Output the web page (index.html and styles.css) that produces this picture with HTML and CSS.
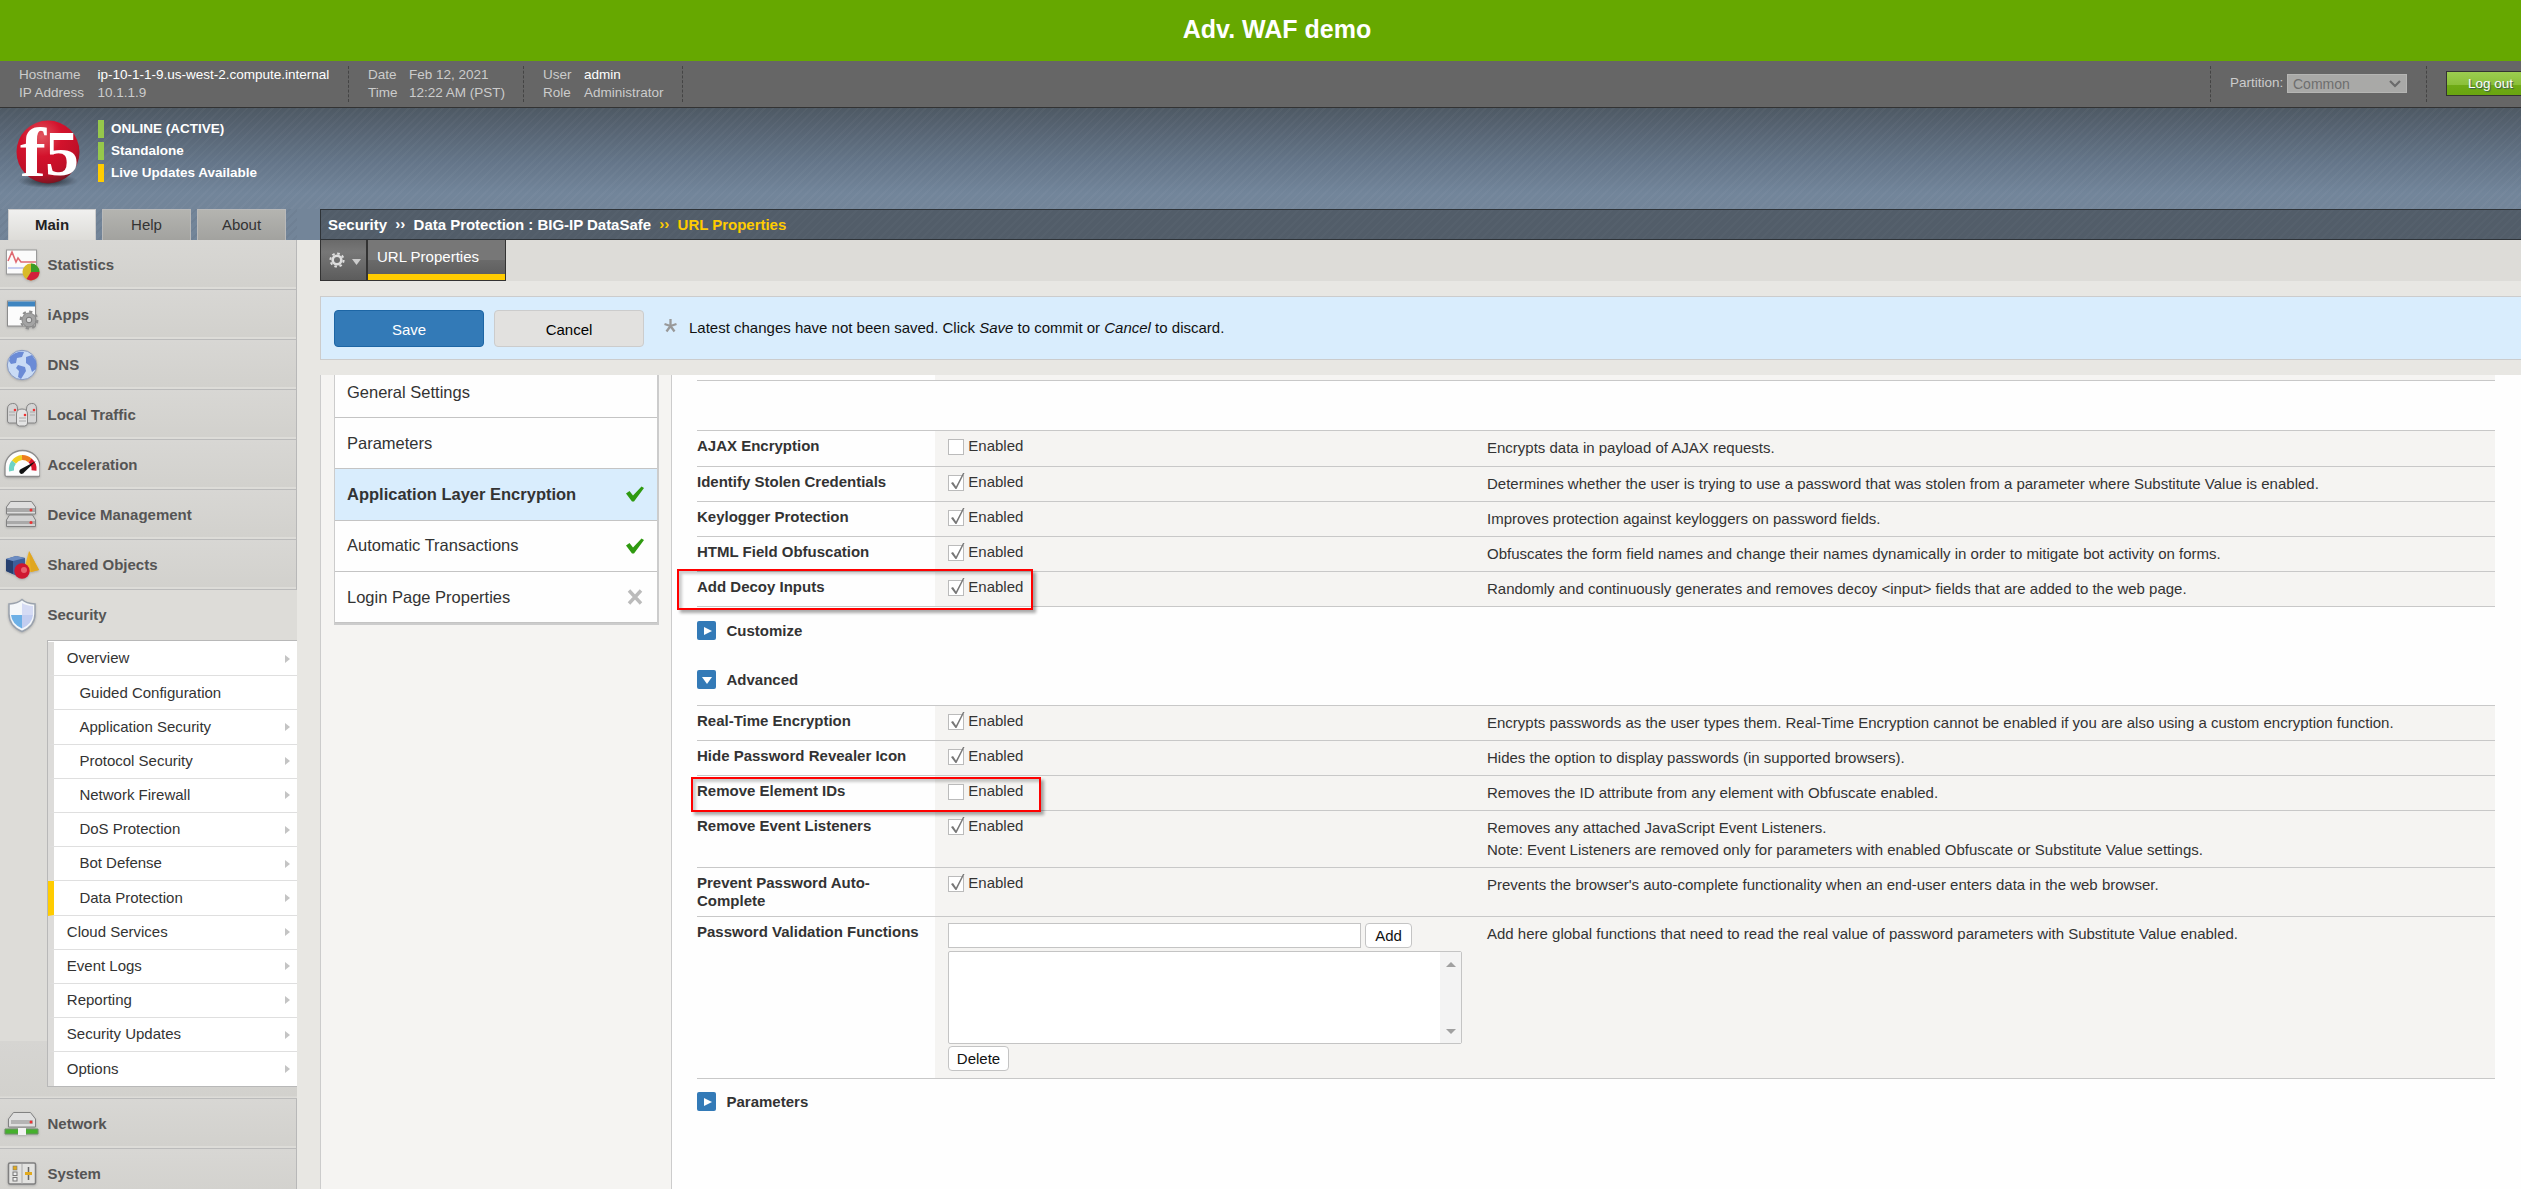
FILE: index.html
```html
<!DOCTYPE html>
<html lang="en">
<head>
<meta charset="utf-8">
<title>BIG-IP - URL Properties</title>
<link rel="stylesheet" href="styles.css">
</head>
<body>
<div class="page">
  <div class="banner">Adv. WAF demo</div>
  <header class="infobar">
    <div class="info info-host"><span>Hostname</span><b>ip-10-1-1-9.us-west-2.compute.internal</b><span>IP Address</span><span>10.1.1.9</span></div>
    <div class="info info-date"><span>Date</span><span>Feb 12, 2021</span><span>Time</span><span>12:22 AM (PST)</span></div>
    <div class="info info-user"><span>User</span><b>admin</b><span>Role</span><span>Administrator</span></div>
    <div class="partition"><label>Partition:</label><div class="select">Common<svg width="12" height="8" viewBox="0 0 12 8"><path d="M1 1l5 5 5-5" fill="none" stroke="#6b6b6b" stroke-width="2.2"/></svg></div></div>
    <button class="logout">Log out</button>
  </header>
  <div class="brand">
    <svg class="logo" width="68" height="70" viewBox="0 0 68 70">
      <defs>
        <radialGradient id="ball" cx=".4" cy=".25" r=".8"><stop offset="0" stop-color="#e0555f"/><stop offset=".4" stop-color="#d3122c"/><stop offset=".75" stop-color="#c01028"/><stop offset="1" stop-color="#6a1620"/></radialGradient>
        <radialGradient id="shade"><stop offset="0" stop-color="#20262d"/><stop offset="1" stop-color="#20262d" stop-opacity="0"/></radialGradient>
      </defs>
      <ellipse cx="34" cy="61" rx="30" ry="7" fill="url(#shade)"/>
      <circle cx="34" cy="32" r="31.500" fill="url(#ball)"/>
      <text x="6" y="56" class="logo-f" textLength="26" lengthAdjust="spacingAndGlyphs">f</text><text x="31" y="55" class="logo-5" textLength="34" lengthAdjust="spacingAndGlyphs">5</text>
    </svg>
    <ul class="status"><li>ONLINE (ACTIVE)</li><li>Standalone</li><li class="warn">Live Updates Available</li></ul>
  </div>
  <div class="main">
    <aside class="side">
      <div class="tabs"><span class="tab on">Main</span><span class="tab">Help</span><span class="tab">About</span></div>
      <nav>
        <div class="mod"><svg width="40" height="36" viewBox="0 0 40 36"><rect x="6.500" y="3" width="30" height="24" fill="#fbfbfb" stroke="#9a9a9a"/><path d="M8 14l4-9 4 10 2-4 3 4h15" fill="none" stroke="#e06a72" stroke-width="1.600"/><path d="M8 21h18" stroke="#c6cdf0" stroke-width="2"/><circle cx="31" cy="25" r="8.500" fill="#d8ba28"/><path d="M31 25v-8.500a8.500 8.500 0 0 1 8.500 8.500z" fill="#3c9c28"/><path d="M31 25h8.500a8.500 8.500 0 0 1-13 7z" fill="#d2203c"/></svg>Statistics</div>
        <div class="mod"><svg width="40" height="36" viewBox="0 0 40 36"><rect x="7.500" y="4" width="28" height="25" fill="#fcfcfc" stroke="#8c8c8c"/><path d="M8 4.500h27v5H8z" fill="#3f85c0"/><circle cx="29" cy="23" r="7" fill="#a4a4a4" stroke="#868686"/><circle cx="29" cy="23" r="8.300" fill="none" stroke="#8e8e8e" stroke-width="2.200" stroke-dasharray="3.200 3.300"/><circle cx="29" cy="23" r="2.800" fill="#d9d9d9" stroke="#777"/></svg>iApps</div>
        <div class="mod"><svg width="40" height="36" viewBox="0 0 40 36"><circle cx="22" cy="18" r="14.700" fill="#c9dbf5" stroke="#8798bf"/><path d="M10 10c4-5 11-6 14-5l-2 5-5 1-1 5-5 1-2-3zM18 18l7 2 1 4-5 8-3-2 1-6-3-3zM26 10l6-2 4 6 0 8-4 3-2-6-4-3z" fill="#6b8bd6"/></svg>DNS</div>
        <div class="mod"><svg width="40" height="36" viewBox="0 0 40 36"><g fill="#d4d4d4" stroke="#858585"><path d="M7.500 12q0-5 5-5.500t5 5.500v14h-8q-2 0-2-2zM26.500 12q0-5 5-5.500t5 5.500v12q0 2-2 2h-8z"/><path d="M16.500 17q0-5 5.500-5t5.500 5v9q0 3-3 3h-5q-3 0-3-3z" fill="#e4e4e4"/></g><path d="M9 15h6M9 18h6M30 15h5M30 18h5M19 21h7M19 24h7" stroke="#aaa"/><circle cx="15" cy="13" r="1.300" fill="#e33"/><circle cx="34" cy="13" r="1.300" fill="#e33"/><circle cx="25" cy="18" r="1.300" fill="#e33"/></svg>Local Traffic</div>
        <div class="mod"><svg width="40" height="36" viewBox="0 0 40 36"><path d="M5 28v-8a17.500 16.500 0 0 1 35 0v8q0 1.500-2 1.500H7q-2 0-2-1.500z" fill="#fdfdfd" stroke="#8c8c8c" stroke-width="1.300"/><path d="M11.500 24a11 11 0 0 1 2.500-9" fill="none" stroke="#6fd3c4" stroke-width="5"/><path d="M14 15a11 11 0 0 1 8-4.500" fill="none" stroke="#f0cf20" stroke-width="5"/><path d="M22 10.500a11 11 0 0 1 8 3" fill="none" stroke="#ee7d1c" stroke-width="5"/><path d="M30 13.500a11 11 0 0 1 4 10" fill="none" stroke="#d8152c" stroke-width="5"/><path d="M36 14L21 22a2.500 2.500 0 1 0 3 3.500z" fill="#111"/></svg>Acceleration</div>
        <div class="mod"><svg width="40" height="36" viewBox="0 0 40 36"><g stroke="#828282"><path d="M6.500 10l4-5.500h21l4 5.500v7h-29z" fill="#dedede"/><path d="M6.500 23l3-5h23l3 5v6.500h-29z" fill="#d2d2d2"/></g><path d="M7 11h28v4H7zM7 24h28v3H7z" fill="#a9a9a9"/><circle cx="31" cy="13" r="1.500" fill="#e33"/><circle cx="31" cy="25.500" r="1.500" fill="#e33"/></svg>Device Management</div>
        <div class="mod"><svg width="40" height="36" viewBox="0 0 40 36"><path d="M6 12l10-3 9 2v14l-8 4-11-5z" fill="#3d5f9b"/><path d="M6 12l7 2v13l-7-3z" fill="#27406f"/><path d="M6 12l10-3 9 2-12 3z" fill="#6c8cc2"/><path d="M29 4l10 19-8 2-7-2z" fill="#edb326"/><path d="M29 4l10 19-8 2z" fill="#e0a620"/><circle cx="22" cy="24" r="7.700" fill="#cf1730"/><circle cx="24" cy="23" r="3" fill="#e8606c"/></svg>Shared Objects</div>
        <div class="mod open"><svg width="40" height="36" viewBox="0 0 40 36"><path d="M22 2.500q4 4 13 4.500v10q0 12-13 17.500Q9 29 9 17V7q9-.5 13-4.500z" fill="#f4f7fa" stroke="#9aa2ad" stroke-width="1.500"/><path d="M11 18h11v13.500Q12 27 11 18z" fill="#6db0e6"/><path d="M22 6q4 2.500 11 3v9H22z" fill="#d5dbf4"/><path d="M22 18h11q-1 9-11 13.500z" fill="#c2cdf0"/></svg>Security</div>
        <div class="sub-wrap"><div class="sub">
          <div class="item">Overview<i></i></div>
          <div class="item l2">Guided Configuration</div>
          <div class="item l2">Application Security<i></i></div>
          <div class="item l2">Protocol Security<i></i></div>
          <div class="item l2">Network Firewall<i></i></div>
          <div class="item l2">DoS Protection<i></i></div>
          <div class="item l2">Bot Defense<i></i></div>
          <div class="item l2 cur">Data Protection<i></i></div>
          <div class="item">Cloud Services<i></i></div>
          <div class="item">Event Logs<i></i></div>
          <div class="item">Reporting<i></i></div>
          <div class="item">Security Updates<i></i></div>
          <div class="item">Options<i></i></div>
        </div></div>
        <div class="mod"><svg width="40" height="36" viewBox="0 0 40 36"><path d="M8.500 13l5-6.500h17l5 6.500v8h-27z" fill="#dfdfdf" stroke="#828282"/><path d="M11 14h22v4H11z" fill="#b4b4b4"/><circle cx="31" cy="16" r="1.500" fill="#e33"/><path d="M5 23h33v5H5z" fill="#45b02c" stroke="#6f8f68"/><rect x="18" y="22" width="8" height="7" fill="#f2f2f2"/></svg>Network</div>
        <div class="mod"><svg width="40" height="36" viewBox="0 0 40 36"><rect x="8.500" y="7" width="27" height="21" rx="1.500" fill="#e2e2e0" stroke="#808080" stroke-width="1.500"/><path d="M22 8v20" stroke="#aaa"/><rect x="13" y="10" width="4" height="4" fill="#e2aa1e" stroke="#777" stroke-width=".6"/><rect x="13" y="16" width="4" height="3.500" fill="#eee" stroke="#777"/><rect x="13" y="21.500" width="4" height="3.500" fill="#eee" stroke="#777"/><path d="M28.500 11v13" stroke="#666" stroke-width="1.500"/><path d="M25 16h7v3h-7z" fill="#e2aa1e"/></svg>System</div>
      </nav>
    </aside>
    <section class="work">
      <div class="crumbs"><span>Security</span><span class="sep">››</span><span>Data Protection : BIG-IP DataSafe</span><span class="sep y">››</span><span class="y">URL Properties</span></div>
      <div class="tabbar">
        <div class="gear"><svg width="16" height="16" viewBox="0 0 16 16"><circle cx="8" cy="8" r="4.300" fill="none" stroke="#ddd" stroke-width="2.600"/><circle cx="8" cy="8" r="6.600" fill="none" stroke="#ddd" stroke-width="2" stroke-dasharray="2.590"/></svg><svg class="caret" width="9" height="6" viewBox="0 0 9 6"><path d="M0 0h9L4.500 6z" fill="#ccc"/></svg></div>
        <div class="wtab">URL Properties</div>
      </div>
      <div class="savebar"><button class="btn save">Save</button><button class="btn cancel">Cancel</button><svg class="star" width="13" height="14" viewBox="0 0 13 14"><path d="M6.500 7V0M6.500 7L.5 5M6.500 7l6-2M6.500 7l-4 5.500M6.500 7l4 5.500" stroke="#999" stroke-width="2.300"/></svg><p>Latest changes have not been saved. Click <em>Save</em> to commit or <em>Cancel</em> to discard.</p></div>
      <div class="panes">
        <div class="menu-pane"><div class="menu">
          <div class="mi">General Settings</div>
          <div class="mi">Parameters</div>
          <div class="mi sel">Application Layer Encryption<svg width="20" height="16" viewBox="0 0 20 16"><path d="M1 7.500l3.500-2.500 3.500 4.500L16.500.5l2.500 1.500L9 15.500H7z" fill="#2f9a10"/></svg></div>
          <div class="mi">Automatic Transactions<svg width="20" height="16" viewBox="0 0 20 16"><path d="M1 7.500l3.500-2.500 3.500 4.500L16.500.5l2.500 1.500L9 15.500H7z" fill="#2f9a10"/></svg></div>
          <div class="mi">Login Page Properties<svg width="20" height="16" viewBox="0 0 20 16"><path d="M4 1.500l12 13M16 1.500l-12 13" stroke="#bbb" stroke-width="3.400"/></svg></div>
        </div></div>
        <div class="content">
          <div class="row stub"><div></div><div></div><div></div></div>
          <div class="blank"></div>
          <div class="table">
            <div class="row first"><div class="lab">AJAX Encryption</div><div class="val"><span class="cb"></span>Enabled</div><div class="desc">Encrypts data in payload of AJAX requests.</div></div>
            <div class="row"><div class="lab">Identify Stolen Credentials</div><div class="val"><span class="cb ck"></span>Enabled</div><div class="desc">Determines whether the user is trying to use a password that was stolen from a parameter where Substitute Value is enabled.</div></div>
            <div class="row"><div class="lab">Keylogger Protection</div><div class="val"><span class="cb ck"></span>Enabled</div><div class="desc">Improves protection against keyloggers on password fields.</div></div>
            <div class="row"><div class="lab">HTML Field Obfuscation</div><div class="val"><span class="cb ck"></span>Enabled</div><div class="desc">Obfuscates the form field names and change their names dynamically in order to mitigate bot activity on forms.</div></div>
            <div class="row"><div class="lab">Add Decoy Inputs</div><div class="val"><span class="cb ck"></span>Enabled</div><div class="desc">Randomly and continuously generates and removes decoy &lt;input&gt; fields that are added to the web page.</div><div class="mark mark-decoy"></div></div>
          </div>
          <div class="fold"><span class="tog"></span>Customize</div>
          <div class="fold adv"><span class="tog down"></span>Advanced</div>
          <div class="table">
            <div class="row"><div class="lab">Real-Time Encryption</div><div class="val"><span class="cb ck"></span>Enabled</div><div class="desc">Encrypts passwords as the user types them. Real-Time Encryption cannot be enabled if you are also using a custom encryption function.</div></div>
            <div class="row"><div class="lab">Hide Password Revealer Icon</div><div class="val"><span class="cb ck"></span>Enabled</div><div class="desc">Hides the option to display passwords (in supported browsers).</div></div>
            <div class="row"><div class="lab">Remove Element IDs</div><div class="val"><span class="cb"></span>Enabled</div><div class="desc">Removes the ID attribute from any element with Obfuscate enabled.</div><div class="mark mark-ids"></div></div>
            <div class="row r-listen"><div class="lab">Remove Event Listeners</div><div class="val"><span class="cb ck"></span>Enabled</div><div class="desc">Removes any attached JavaScript Event Listeners.<br>Note: Event Listeners are removed only for parameters with enabled Obfuscate or Substitute Value settings.</div></div>
            <div class="row r-auto"><div class="lab">Prevent Password Auto-<br>Complete</div><div class="val"><span class="cb ck"></span>Enabled</div><div class="desc">Prevents the browser's auto-complete functionality when an end-user enters data in the web browser.</div></div>
            <div class="row r-func"><div class="lab">Password Validation Functions</div><div class="funcs"><div class="add"><input type="text"><button class="sm">Add</button></div><div class="list"><div class="scroll"><i class="up"></i><i class="dn"></i></div></div><button class="sm">Delete</button></div><div class="desc">Add here global functions that need to read the real value of password parameters with Substitute Value enabled.</div></div>
          </div>
          <div class="fold last"><span class="tog"></span>Parameters</div>
        </div>
      </div>
    </section>
  </div>
</div>
</body>
</html>
```
FILE: styles.css
```css
* { box-sizing: border-box; }
html, body { margin: 0; height: 1189px; overflow: hidden; }
body { font: 15px/17px "Liberation Sans", Arial, sans-serif; color: #333; background: #e8e7e3; }
button { font: inherit; margin: 0; padding: 0; }
ul { list-style: none; margin: 0; padding: 0; }
.page { width: 2554px; height: 1189px; overflow: hidden; display: flex; flex-direction: column; }

.banner { height: 61px; flex: none; background: #66a800; color: #fff; font-size: 25px; font-weight: bold; line-height: 59px; text-align: center; }
.infobar { height: 47px; flex: none; background: #666; border-bottom: 1px solid #333; display: flex; padding-top: 5px; font-size: 13.5px; color: #ccc; }
.info { display: grid; align-content: start; height: 36px; line-height: 18px; border-right: 1px dashed #444; padding-left: 19px; }
.info b { font-weight: normal; color: #fff; }
.info-host { width: 349px; grid-template-columns: 78.5px 1fr; }
.info-date { width: 175px; grid-template-columns: 41px 1fr; }
.info-user { width: 159px; grid-template-columns: 41px 1fr; }
.partition { margin-left: auto; width: 217px; height: 36px; border: 1px dashed #444; border-width: 0 1px; display: flex; padding: 8px 0 0 19px; line-height: 18px; }
.partition label { width: 57px; }
.select { width: 120px; height: 19px; background: #a9a9a7; border: 1px solid #b5b5b3; color: #6e6e6e; padding: 0 5px; display: flex; justify-content: space-between; align-items: center; font-size: 14px; }
.logout { margin: 5px 19px 0 19px; width: 89px; height: 25px; border: 1px solid #333; background: linear-gradient(#9ccd50, #8bc03a 55%, #6fab16 56%, #69a510); color: #fff; text-shadow: 1px 1px 1px #355; line-height: 21px; }

.brand { height: 101px; flex: none; display: flex; background: repeating-linear-gradient(135deg, #ffffff07 0 2px, transparent 2px 6px), linear-gradient(#4e5964, #65768a 55%, #72859a 85%, #738599); padding: 12px 0 0 14px; }
.logo { flex: none; overflow: visible; }
.logo-f, .logo-5 { font-family: "Liberation Serif", serif; font-weight: bold; font-size: 70px; fill: #fff; }
.logo-5 { font-size: 64px; }
.status { margin-left: 16px; display: flex; flex-direction: column; gap: 4px; font-size: 13.5px; font-weight: bold; color: #fff; }
.status li { height: 18px; line-height: 17px; border-left: 6px solid #96c84b; padding-left: 7px; }
.status .warn { border-color: #fc0; }

.main { flex: 1; display: flex; min-height: 0; background: linear-gradient(#738599, #738599) 0 0 / 100% 31px no-repeat; }
.side { width: 297px; margin-right: 23px; flex: none; }
.tabs { height: 31px; display: flex; gap: 6px; padding-left: 8px; background: repeating-linear-gradient(135deg, #00000009 0 2px, transparent 2px 6px); }
.tab { width: 89px; height: 31px; line-height: 30px; text-align: center; background: linear-gradient(#b4b4b0, #a2a29f); border: 1px solid #b9b9b9; border-bottom: 0; color: #333; }
.tab.on { width: 88px; background: linear-gradient(#f0f0ef, #dddcd8); font-weight: bold; color: #222; border-color: #ccc; }
.mod { height: 50px; display: flex; align-items: center; gap: 7.500px; font-weight: bold; color: #555; background: linear-gradient(#d8d7d4, #d2d1cd) 0 0 / 100% 47px no-repeat #dddcd8; border-bottom: 1px solid #bbb; border-right: 1px solid #b8b8b8; line-height: 49px; }
.mod svg { flex: none; filter: drop-shadow(0 1px 1px #8888); }
.mod.open { background: #dddcd8; border-color: transparent; }
.sub-wrap { height: 459px; padding-left: 47px; border-bottom: 1px solid #bbb; background: linear-gradient(#dddcd8 401px, #d6d5d2 401px, #d2d1cd 456px, #dddcd8 457px); }
.sub { border: 1px solid #b8b8b8; border-right: 0; background: #fff; padding-top: 1px; }
.item { height: 34.200px; line-height: 32.500px; border-left: 6px solid #dddcda; border-bottom: 1px solid #dfdfdf; padding-left: 12.800px; display: flex; justify-content: space-between; align-items: center; padding-right: 7px; color: #333; }
.item:last-child { border-bottom: 0; }
.item.l2 { padding-left: 25.400px; }
.item.cur { border-left-color: #fc0; }
.item i { border: 4.500px solid transparent; border-left: 5px solid #c4c4c4; border-right: 0; }

.work { flex: 1; min-width: 0; display: flex; flex-direction: column; background: linear-gradient(transparent 31px, #e8e7e3 31px); }
.crumbs { height: 31px; flex: none; border: 1px solid #2e3338; border-right: 0; background: repeating-linear-gradient(135deg, #ffffff05 0 2px, transparent 2px 6px), #525d69; color: #fff; font-weight: bold; line-height: 29px; padding-left: 7px; display: flex; letter-spacing: -.02px; }
.crumbs .sep { margin: 0 8.300px; line-height: 28px; }
.crumbs .y { color: #fc0; }
.tabbar { height: 41px; flex: none; display: flex; background: #dddcd8; }
.gear { width: 47px; border: 1px solid #333; border-top: 0; background: linear-gradient(#6a6a6a, #777 30%, #5c5c5c); display: flex; align-items: center; gap: 7px; padding-left: 8px; }
.caret { margin-top: 3px; }
.wtab { width: 139px; border: 1px solid #333; border-width: 0 1px 1px; box-shadow: inset 0 -6px #fc0; background: linear-gradient(#777 50%, #6a6a6a 51%, #5a5a5a); color: #fff; padding-left: 9px; line-height: 34px; }
.savebar { height: 64px; flex: none; margin-top: 15px; border: 1px solid #ccc; background: #d9edfd; color: #111; display: flex; padding: 13px; }
.btn { width: 150px; height: 37px; border: 1px solid #ccc; border-radius: 4px; background: #e2e1df; padding-top: 1px; }
.btn.save { background: #337ab7; border-color: #1d66a5; color: #fff; margin-right: 10px; }
.star { margin: 9px 12px 0 20px; }
.savebar p { margin: 9px 0 0; }
.panes { flex: 1; margin-top: 15px; min-height: 0; display: flex; }
.menu-pane { width: 351px; border-left: 1px solid #ccc; background: #f5f4f2; padding-left: 13px; }
.menu { width: 325px; border: 1px solid #ccc; border-width: 0 2px 2px 1px; background: #fefefe; font-size: 16.500px; }
.mi { height: 51.300px; border-bottom: 1px solid #c4c4c4; padding: 0 12px; display: flex; align-items: center; justify-content: space-between; }
.mi:first-child { height: 43px; padding-bottom: 8px; }
.mi.sel { background: #d9edfd; font-weight: bold; }
.content { flex: 1; border-left: 1px solid #ccc; background: #fefefe; padding-left: 25px; overflow: hidden; }
.content > * { width: 1798px; }
.blank { height: 49px; }
.row { position: relative; display: grid; grid-template-columns: 238px 540px 1fr; height: 35px; border-top: 1px solid #c8c8c8; background: linear-gradient(90deg, transparent 238px, #f5f4f2 238px); line-height: 18px; }
.row.stub { height: 6px; border: 0; border-bottom: 1px solid #c8c8c8; }
.row.first { height: 36px; }
.table { border-bottom: 1px solid #c8c8c8; }
.lab { font-weight: bold; padding-top: 6px; }
.val { padding: 6px 0 0 13px; display: flex; }
.desc { padding: 6px 0 0 12px; line-height: 22px; white-space: nowrap; }
.cb { position: relative; width: 16px; height: 16px; border: 1px solid #bbb; background: #fff; margin: 2px 4.300px 0 0; }
.cb.ck::before { content: ""; position: absolute; left: 0; top: -3px; width: 16px; height: 17px; background: #777; clip-path: polygon(2px 10px, 4px 9px, 7px 13.500px, 14px 0, 15.500px 0, 7.500px 16px, 6.500px 16px); }
.fold { height: 49px; padding-top: 14px; display: flex; gap: 10.500px; font-weight: bold; line-height: 20px; }
.tog { width: 19px; height: 19px; border-radius: 2px; background: #337ab7; display: flex; align-items: center; justify-content: center; }
.tog::before { content: ""; border: 4.500px solid transparent; border-left: 8px solid #fff; border-right: 0; margin-left: 2px; }
.tog.down::before { border: 5px solid transparent; border-top: 7px solid #fff; border-bottom: 0; margin: 2px 0 0; }
.r-listen { height: 57px; }
.r-auto { height: 49px; }
.r-func { height: 162px; }
.fold.last { padding-top: 13px; }
.funcs { padding: 6px 0 0 13px; }
.add { display: flex; gap: 4px; }
.add input { width: 413px; height: 25px; border: 1px solid #c4c4c4; background: #fff; }
.sm { width: 47px; height: 25px; border: 1px solid #c4c4c4; border-radius: 4px; background: #fff; color: #111; display: block; }
.list + .sm { width: 61px; }
.list { width: 514px; height: 93px; margin: 3px 0 2px; border: 1px solid #c4c4c4; border-radius: 2px; background: #fff; display: flex; justify-content: flex-end; }
.scroll { width: 21px; background: #f3f3f3; display: flex; flex-direction: column; justify-content: space-between; align-items: center; padding: 10px 0 9px; }
.scroll i { border: 5px solid transparent; }
.scroll .up { border-bottom-color: #a0a0a0; border-top: 0; }
.scroll .dn { border-top-color: #a0a0a0; border-bottom: 0; }
.mark { position: absolute; z-index: 2; border: 2px solid #f00; box-shadow: 3px 3px 3px #0005, inset 3px 3px 3px #0003; }
.mark-decoy { left: -20px; top: -3px; width: 356px; height: 41px; }
.mark-ids { left: -6px; top: 1px; width: 350px; height: 35px; }
```
